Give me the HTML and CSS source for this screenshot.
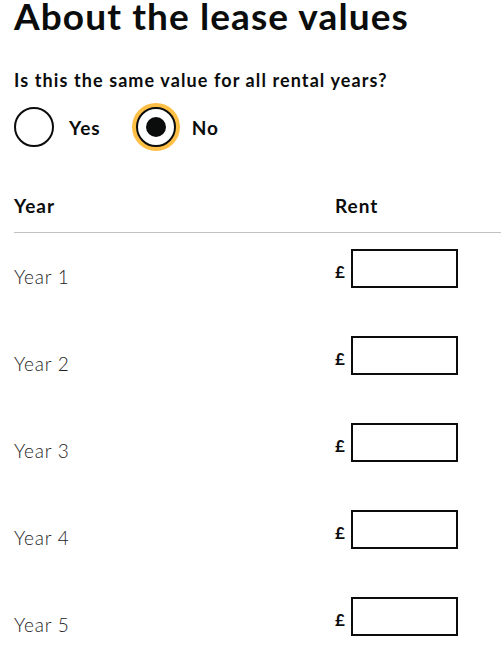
FILE: index.html
```html
<!DOCTYPE html>
<html lang="en">
<head>
<meta charset="utf-8">
<title>About the lease values</title>
<link rel="stylesheet" href="styles.css">
</head>
<body>
<main class="page">
  <h1 class="title">About the lease values</h1>
  <div class="question">
    <div class="question-label">Is this the same value for all rental years?</div>
    <div class="radios">
      <label class="radio">
        <span class="radio-circle"></span>
        <span class="radio-text">Yes</span>
      </label>
      <label class="radio radio-checked">
        <span class="radio-circle"><span class="radio-dot"></span></span>
        <span class="radio-text">No</span>
      </label>
    </div>
  </div>
  <div class="table">
    <div class="table-head">
      <div class="th">Year</div>
      <div class="th">Rent</div>
    </div>
    <div class="row">
      <div class="year">Year 1</div>
      <div class="rent"><span class="pound">£</span><span class="input"></span></div>
    </div>
    <div class="row">
      <div class="year">Year 2</div>
      <div class="rent"><span class="pound">£</span><span class="input"></span></div>
    </div>
    <div class="row">
      <div class="year">Year 3</div>
      <div class="rent"><span class="pound">£</span><span class="input"></span></div>
    </div>
    <div class="row">
      <div class="year">Year 4</div>
      <div class="rent"><span class="pound">£</span><span class="input"></span></div>
    </div>
    <div class="row">
      <div class="year">Year 5</div>
      <div class="rent"><span class="pound">£</span><span class="input"></span></div>
    </div>
  </div>
</main>
</body>
</html>
```
FILE: styles.css
```css
html, body {
  margin: 0;
  padding: 0;
  background: #ffffff;
  overflow: hidden;
}
body {
  font-family: "Lato", "Liberation Sans", sans-serif;
  color: #0b0c0c;
}
.page {
  padding-left: 14px;
}
.title {
  margin: -2px 0 0;
  font-size: 37px;
  line-height: 36px;
  font-weight: 700;
  letter-spacing: 1.1px;
  white-space: nowrap;
}
.question {
  margin-top: 36px;
}
.question-label {
  font-size: 18px;
  line-height: 20px;
  font-weight: 700;
  letter-spacing: 1.1px;
}
.radios {
  display: flex;
  align-items: center;
  margin-top: 13px;
  height: 48px;
}
.radio {
  display: flex;
  align-items: center;
}
.radio-circle {
  width: 40px;
  height: 40px;
  box-sizing: border-box;
  border: 2px solid #0b0c0c;
  border-radius: 50%;
  display: flex;
  align-items: center;
  justify-content: center;
  background: #fff;
}
.radio-checked {
  margin-left: 35px;
}
.radio-checked .radio-circle {
  box-shadow: 0 0 0 4px #ffbf47;
}
.radio-dot {
  width: 20px;
  height: 20px;
  border-radius: 50%;
  background: #0b0c0c;
}
.radio-text {
  font-size: 19px;
  font-weight: 700;
  letter-spacing: 1px;
  margin-left: 15px;
}
.radio-checked .radio-text {
  margin-left: 16px;
}
.table {
  margin-top: 45px;
}
.table-head {
  display: grid;
  grid-template-columns: 321px 1fr;
  border-bottom: 1px solid #bfc1c3;
  height: 37px;
  box-sizing: border-box;
}
.th {
  font-size: 19px;
  font-weight: 700;
  line-height: 20px;
  letter-spacing: 1px;
}
.row {
  display: grid;
  grid-template-columns: 321px 1fr;
  height: 87px;
  padding-top: 16px;
  box-sizing: border-box;
}
.year {
  font-size: 19px;
  font-weight: 300;
  color: #1d1d1d;
  letter-spacing: 0.8px;
  padding-top: 16px;
}
.rent {
  display: flex;
  align-items: flex-start;
}
.pound {
  font-size: 17px;
  font-weight: 700;
  margin-top: 12px;
  width: 16px;
}
.input {
  width: 107px;
  height: 39px;
  box-sizing: border-box;
  border: 2px solid #0b0c0c;
}
```
